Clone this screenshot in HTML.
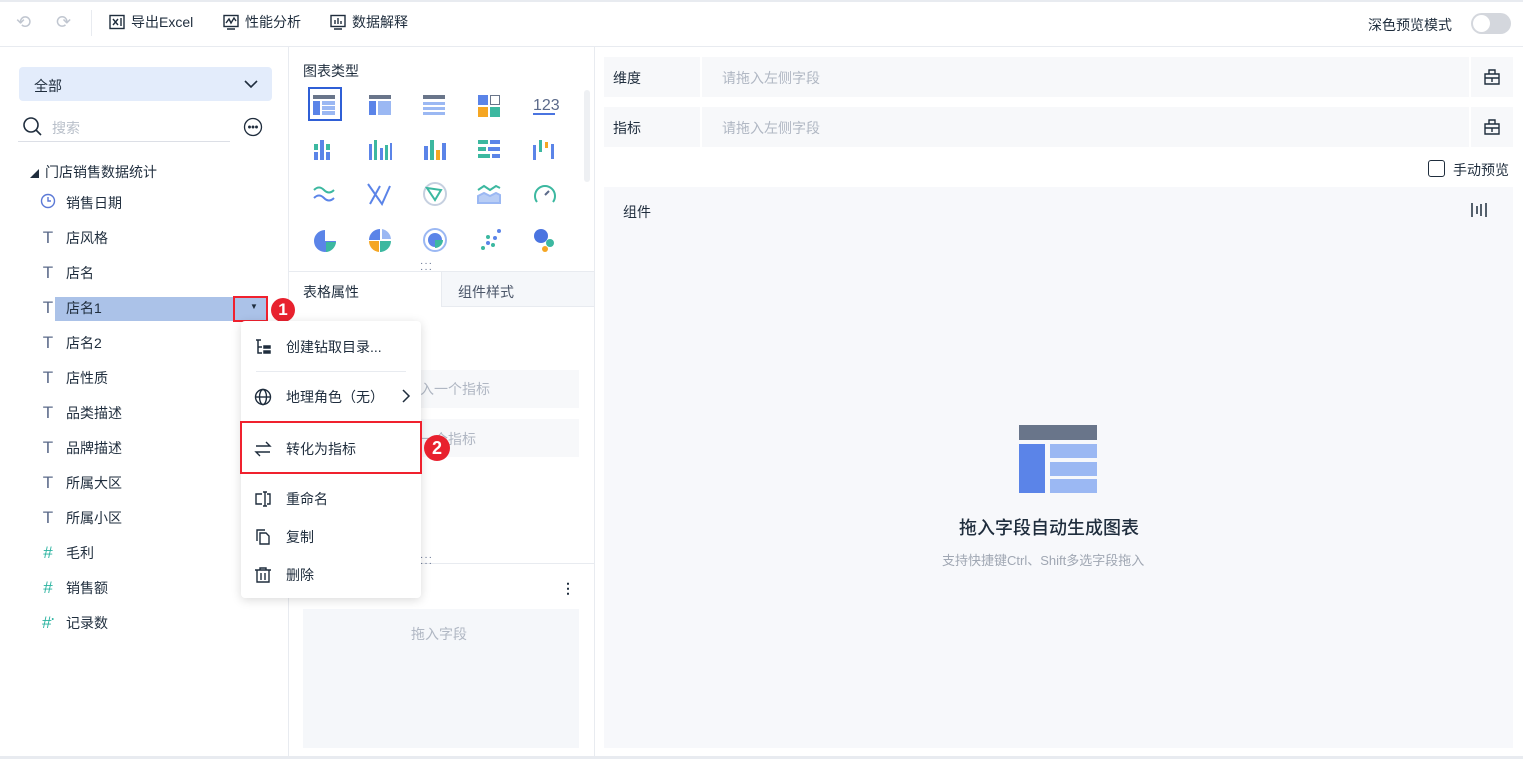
<!DOCTYPE html><html><head><meta charset="utf-8"><style>
*{box-sizing:border-box;margin:0;padding:0}
body{width:1523px;height:759px;overflow:hidden;background:#fff;font-family:"Liberation Sans","Noto Sans CJK SC",sans-serif;font-size:14px;color:#1f2d3d;position:relative}
.a{position:absolute}
.top{left:0;top:0;width:1523px;height:47px;border-top:2px solid #e8ebf0;border-bottom:1px solid #e8ebf0}
.tb{top:12px;font-size:14px;color:#1f2d3d;display:flex;align-items:center;gap:6px}
.li{left:38px;display:flex;align-items:center;height:24px}
.li .ic{width:20px;color:#5b6a8a;font-size:17px;text-align:center;margin-right:8px}
.gi{width:24px;height:24px}
.mi{left:254px;display:flex;align-items:center;font-size:14px;color:#1f2d3d}
.mi svg{margin-right:14px}
</style></head><body>
<div class="a top"></div>
<div class="a" style="left:16px;top:12px;color:#c0c6d0;font-size:18px">⟲</div>
<div class="a" style="left:56px;top:12px;color:#c0c6d0;font-size:18px">⟳</div>
<div class="a" style="left:91px;top:10px;width:1px;height:26px;background:#e8ebf0"></div>
<div class="a tb" style="left:109px"><svg width="16" height="16" viewBox="0 0 16 16" fill="none" stroke="#1f2d3d" stroke-width="1.4"><rect x="1" y="1.5" width="14" height="13"/><path d="M4 5l5 6M9 5l-5 6M12 4v8"/></svg>导出Excel</div>
<div class="a tb" style="left:223px"><svg width="16" height="16" viewBox="0 0 16 16" fill="none" stroke="#1f2d3d" stroke-width="1.4"><rect x="1" y="1.5" width="14" height="11"/><path d="M3 9l3-4 2 4 3-5 2 3M4 15h8"/></svg>性能分析</div>
<div class="a tb" style="left:330px"><svg width="16" height="16" viewBox="0 0 16 16" fill="none" stroke="#1f2d3d" stroke-width="1.4"><rect x="1" y="1.5" width="14" height="11"/><path d="M5 10V6M8 10V4M11 10V7M4 15h8"/></svg>数据解释</div>
<div class="a" style="left:1368px;top:15px;font-size:14px">深色预览模式</div>
<div class="a" style="left:1471px;top:13px;width:40px;height:21px;border-radius:11px;background:#d4d7dd"><div style="position:absolute;left:2px;top:2px;width:17px;height:17px;border-radius:50%;background:#fff"></div></div>
<!-- left -->
<div class="a" style="left:288px;top:47px;width:1px;height:712px;background:#e8ebf0"></div>
<div class="a" style="left:19px;top:67px;width:253px;height:34px;background:#e3ecfb;border-radius:4px"></div>
<div class="a" style="left:34px;top:76px;font-size:14px">全部</div>
<svg class="a" style="left:243px;top:78px" width="16" height="12" viewBox="0 0 16 12" fill="none" stroke="#1f2d3d" stroke-width="1.6"><path d="M2 3l6 6 6-6"/></svg>
<svg class="a" style="left:22px;top:116px" width="22" height="22" viewBox="0 0 22 22" fill="none" stroke="#1f2d3d" stroke-width="1.6"><circle cx="9" cy="9" r="7"/><path d="M14 14l5 5"/></svg>
<div class="a" style="left:52px;top:118px;color:#b8bfc9">搜索</div>
<div class="a" style="left:18px;top:141px;width:212px;height:1px;background:#dcdfe6"></div>
<svg class="a" style="left:243px;top:117px" width="20" height="20" viewBox="0 0 20 20" fill="none" stroke="#1f2d3d" stroke-width="1.3"><circle cx="10" cy="10" r="8.5"/><circle cx="6.5" cy="10" r=".8" fill="#1f2d3d"/><circle cx="10" cy="10" r=".8" fill="#1f2d3d"/><circle cx="13.5" cy="10" r=".8" fill="#1f2d3d"/></svg>
<div class="a" style="left:30px;top:162px;font-size:14px"><span style="font-size:9px;margin-right:6px">◢</span>门店销售数据统计</div>
<div class="a" style="left:55px;top:297px;width:213px;height:24px;background:#abc2e8"></div>
<div class="a" style="left:233px;top:296px;width:35px;height:26px;border:2px solid #f0212e"></div>
<div class="a" style="left:250px;top:302px;font-size:8px">▼</div>
<div class="a" style="left:271px;top:298px;width:24px;height:24px;border-radius:50%;background:#e8212e;color:#fff;font-weight:bold;font-size:17px;text-align:center;line-height:24px">1</div>
<div class="a li" style="top:191px"><span class="ic"><svg width="16" height="16" viewBox="0 0 16 16" fill="none" stroke="#5b79d6" stroke-width="1.4"><circle cx="8" cy="8" r="6.5"/><path d="M8 4v4h3"/></svg></span>销售日期</div>
<div class="a li" style="top:226px"><span class="ic">T</span>店风格</div>
<div class="a li" style="top:261px"><span class="ic">T</span>店名</div>
<div class="a li" style="top:296px"><span class="ic">T</span>店名1</div>
<div class="a li" style="top:331px"><span class="ic">T</span>店名2</div>
<div class="a li" style="top:366px"><span class="ic">T</span>店性质</div>
<div class="a li" style="top:401px"><span class="ic">T</span>品类描述</div>
<div class="a li" style="top:436px"><span class="ic">T</span>品牌描述</div>
<div class="a li" style="top:471px"><span class="ic">T</span>所属大区</div>
<div class="a li" style="top:506px"><span class="ic">T</span>所属小区</div>
<div class="a li" style="top:541px"><span class="ic" style="color:#2bb3a0">#</span>毛利</div>
<div class="a li" style="top:576px"><span class="ic" style="color:#2bb3a0">#</span>销售额</div>
<div class="a li" style="top:611px"><span class="ic" style="color:#2bb3a0">#<sup style="font-size:7px">•</sup></span>记录数</div>
<!-- middle -->
<div class="a" style="left:594px;top:47px;width:1px;height:712px;background:#e8ebf0"></div>
<div class="a" style="left:303px;top:61px;font-size:14px">图表类型</div>
<div class="a" style="left:584px;top:90px;width:6px;height:92px;border-radius:3px;background:#eef0f3"></div>
<div class="a" style="left:308px;top:87px;width:34px;height:34px;border:2px solid #2f5fd6"></div>
<svg class="a" style="left:300px;top:90px" width="270" height="170" viewBox="0 0 270 170">
<g transform="translate(13,5)"><rect width="22" height="4" fill="#69758a"/><rect y="6" width="7" height="14" fill="#5b84e8"/><rect x="9" y="6" width="13" height="4" fill="#9bb8f3"/><rect x="9" y="11" width="13" height="4" fill="#9bb8f3"/><rect x="9" y="16" width="13" height="4" fill="#9bb8f3"/></g>
<g transform="translate(69,5)"><rect width="22" height="4" fill="#69758a"/><rect y="6" width="7" height="14" fill="#5b84e8"/><rect x="9" y="6" width="13" height="14" fill="#9bb8f3"/></g>
<g transform="translate(123,5)"><rect width="22" height="4" fill="#69758a"/><rect y="7" width="22" height="3" fill="#9bb8f3"/><rect y="12" width="22" height="3" fill="#9bb8f3"/><rect y="17" width="22" height="3" fill="#9bb8f3"/></g>
<g transform="translate(178,5)"><rect width="10" height="10" fill="#5b84e8"/><rect x="12.5" y=".5" width="9" height="9" fill="none" stroke="#69758a"/><rect y="12" width="10" height="10" fill="#f5a623"/><rect x="12" y="12" width="10" height="10" fill="#3cb8a0"/></g>
<text x="233" y="20" font-size="16" fill="#5b6a8a" font-family="Liberation Sans">123</text><rect x="233" y="23" width="22" height="2" fill="#4a74e0"/>
<g fill="#5b84e8"><rect x="20" y="50" width="4" height="20"/><rect x="14" y="54" width="4" height="6" fill="#3cb8a0"/><rect x="26" y="54" width="4" height="6" fill="#3cb8a0"/><rect x="14" y="62" width="4" height="8"/><rect x="26" y="62" width="4" height="8"/>
<rect x="69" y="54" width="3" height="16"/><rect x="74" y="50" width="3" height="20" fill="#3cb8a0"/><rect x="80" y="58" width="3" height="12"/><rect x="85" y="55" width="3" height="15" fill="#3cb8a0"/><rect x="90" y="53" width="2" height="17"/>
<rect x="124" y="56" width="4" height="14"/><rect x="130" y="50" width="4" height="20" fill="#3cb8a0"/><rect x="136" y="60" width="4" height="10" fill="#f5a623"/><rect x="142" y="53" width="4" height="17"/>
<rect x="178" y="50" width="10" height="4" fill="#3cb8a0"/><rect x="190" y="50" width="10" height="4"/><rect x="178" y="57" width="8" height="4" fill="#3cb8a0"/><rect x="188" y="57" width="12" height="4"/><rect x="178" y="64" width="12" height="4" fill="#3cb8a0"/><rect x="192" y="64" width="8" height="4"/>
<rect x="233" y="55" width="3" height="15"/><rect x="239" y="50" width="3" height="12" fill="#3cb8a0"/><rect x="245" y="52" width="3" height="6" fill="#f5a623"/><rect x="251" y="54" width="3" height="15"/></g>
<g fill="none" stroke-width="2"><path d="M14 100q5-5 10 0t10 0" stroke="#3cb8a0"/><path d="M14 108q5-5 10 0t10 0" stroke="#5b84e8"/><path d="M68 94l14 20 8-18M70 114l10-18" stroke="#5b84e8"/><circle cx="135" cy="104" r="11" stroke="#c6d0e0"/><path d="M127 98l14 2-6 10z" stroke="#3cb8a0"/><path d="M178 100l6-4 6 4 6-4 4 2" stroke="#3cb8a0"/><path d="M178 106l6-3 6 3 6-3 4 2v8h-22z" fill="#b8cdf5" stroke="#9bb8f3"/><path d="M237 112a10 10 0 1 1 16 0" stroke="#3cb8a0"/><path d="M245 105l4-4" stroke="#5b6a8a"/></g>
<path d="M25 140a11 11 0 1 0 11 11h-11z" fill="#5b84e8"/><path d="M26 152h10a11 11 0 0 1-10 10z" fill="#3cb8a0"/>
<path d="M80 139a11 11 0 0 0-11 11h11z" fill="#5b84e8"/><path d="M80 151h11a11 11 0 0 1-11 11z" fill="#3cb8a0"/><path d="M79 151v11a11 11 0 0 1-10-11z" fill="#f5a623"/><path d="M82 139a11 11 0 0 1 9 10h-9z" fill="#9bb8f3"/>
<circle cx="135" cy="150" r="11" fill="none" stroke="#9bb8f3" stroke-width="2"/><circle cx="135" cy="150" r="7" fill="#5b84e8"/><path d="M135 150h8a8 8 0 0 1-8 8z" fill="#3cb8a0"/>
<g fill="#5b84e8"><circle cx="183" cy="158" r="2" fill="#3cb8a0"/><circle cx="188" cy="153" r="2"/><circle cx="193" cy="155" r="2" fill="#3cb8a0"/><circle cx="195" cy="148" r="2"/><circle cx="199" cy="141" r="2"/><circle cx="188" cy="147" r="2" fill="#3cb8a0"/></g>
<circle cx="241" cy="146" r="7" fill="#4a74e0"/><circle cx="250" cy="153" r="4" fill="#3cb8a0"/><circle cx="245" cy="159" r="3" fill="#f5a623"/>
</svg>
<div class="a" style="left:289px;top:271px;width:305px;height:1px;background:#e8ebf0"></div>
<div class="a" style="left:420px;top:261px;font-size:10px;letter-spacing:1px;color:#5b6a8a;line-height:6px">···<br>···</div>
<div class="a" style="left:441px;top:272px;width:153px;height:35px;background:#f5f7fa;border-left:1px solid #e8ebf0;border-bottom:1px solid #e8ebf0"></div>
<div class="a" style="left:303px;top:282px;font-size:14px">表格属性</div>
<div class="a" style="left:458px;top:282px;font-size:14px;color:#4a5568">组件样式</div>
<div class="a" style="left:303px;top:370px;width:276px;height:38px;background:#f7f8fa"></div>
<div class="a" style="left:303px;top:419px;width:276px;height:38px;background:#f7f8fa"></div>
<div class="a" style="left:420px;top:379px;color:#b0b7c3">入一个指标</div>
<div class="a" style="left:420px;top:429px;color:#b0b7c3">一个指标</div>
<div class="a" style="left:289px;top:563px;width:305px;height:1px;background:#e8ebf0"></div>
<div class="a" style="left:420px;top:555px;font-size:10px;letter-spacing:1px;color:#5b6a8a;line-height:6px">···<br>···</div>
<div class="a" style="left:561px;top:580px;font-size:14px;font-weight:bold">⋮</div>
<div class="a" style="left:303px;top:609px;width:276px;height:139px;background:#f5f7fa"></div>
<div class="a" style="left:411px;top:624px;color:#b0b7c3">拖入字段</div>
<!-- menu -->
<div class="a" style="left:241px;top:321px;width:180px;height:277px;background:#fff;border-radius:4px;box-shadow:0 2px 10px rgba(0,0,0,.15)"></div>
<div class="a" style="left:256px;top:371px;width:150px;height:1px;background:#e8ebf0"></div>
<div class="a mi" style="top:337px"><svg width="18" height="18" viewBox="0 0 18 18" fill="none" stroke="#1f2d3d" stroke-width="1.5"><path d="M2 2h5M4 2v13h4M4 9h4"/><rect x="10" y="8" width="6" height="2" fill="#1f2d3d"/><rect x="10" y="13" width="6" height="2" fill="#1f2d3d"/></svg>创建钻取目录...</div>
<div class="a mi" style="top:387px"><svg width="18" height="18" viewBox="0 0 18 18" fill="none" stroke="#1f2d3d" stroke-width="1.4"><circle cx="9" cy="9" r="7.5"/><ellipse cx="9" cy="9" rx="3.5" ry="7.5"/><path d="M1.5 9h15"/></svg>地理角色（无）</div>
<svg class="a" style="left:401px;top:389px" width="10" height="14" viewBox="0 0 10 14" fill="none" stroke="#1f2d3d" stroke-width="1.5"><path d="M2 1l6 6-6 6"/></svg>
<div class="a" style="left:240px;top:421px;width:182px;height:53px;border:2px solid #f0212e"></div>
<div class="a mi" style="top:439px"><svg width="18" height="18" viewBox="0 0 18 18" fill="none" stroke="#1f2d3d" stroke-width="1.4"><path d="M2 6h14l-4-4M16 12H2l4 4"/></svg>转化为指标</div>
<div class="a" style="left:424px;top:435px;width:26px;height:26px;border-radius:50%;background:#e8212e;color:#fff;font-weight:bold;font-size:18px;text-align:center;line-height:26px">2</div>
<div class="a mi" style="top:489px"><svg width="18" height="18" viewBox="0 0 18 18" fill="none" stroke="#1f2d3d" stroke-width="1.4"><path d="M8 4H2v10h6M13 4h3v10h-3M9 2h4M11 2v14M9 16h4"/></svg>重命名</div>
<div class="a mi" style="top:527px"><svg width="18" height="18" viewBox="0 0 18 18" fill="none" stroke="#1f2d3d" stroke-width="1.4"><path d="M3 13V2h8"/><path d="M6 5h6l3 3v8H6z"/></svg>复制</div>
<div class="a mi" style="top:565px"><svg width="18" height="18" viewBox="0 0 18 18" fill="none" stroke="#1f2d3d" stroke-width="1.4"><path d="M1 4h16M6 4V2h6v2M3 4v12h12V4M7 7v7M11 7v7"/></svg>删除</div>
<!-- right -->
<div class="a" style="left:604px;top:57px;width:909px;height:40px;background:#f7f8fa"></div>
<div class="a" style="left:700px;top:57px;width:2px;height:40px;background:#fff"></div>
<div class="a" style="left:1469px;top:57px;width:2px;height:40px;background:#fff"></div>
<div class="a" style="left:604px;top:107px;width:909px;height:40px;background:#f7f8fa"></div>
<div class="a" style="left:700px;top:107px;width:2px;height:40px;background:#fff"></div>
<div class="a" style="left:1469px;top:107px;width:2px;height:40px;background:#fff"></div>
<div class="a" style="left:613px;top:68px">维度</div>
<div class="a" style="left:722px;top:68px;color:#b0b7c3">请拖入左侧字段</div>
<div class="a" style="left:613px;top:118px">指标</div>
<div class="a" style="left:722px;top:118px;color:#b0b7c3">请拖入左侧字段</div>
<svg class="a" style="left:1483px;top:68px" width="18" height="18" viewBox="0 0 18 18" fill="none" stroke="#1f2d3d" stroke-width="1.4"><path d="M6 6V2h6v4M2 6h14v10H2zM2 10h14M9 10v4"/></svg>
<svg class="a" style="left:1483px;top:118px" width="18" height="18" viewBox="0 0 18 18" fill="none" stroke="#1f2d3d" stroke-width="1.4"><path d="M6 6V2h6v4M2 6h14v10H2zM2 10h14M9 10v4"/></svg>
<div class="a" style="left:1428px;top:160px;width:17px;height:17px;border:1.5px solid #1f2d3d;border-radius:3px"></div>
<div class="a" style="left:1453px;top:160px">手动预览</div>
<div class="a" style="left:604px;top:187px;width:909px;height:561px;background:#f7f8fb"></div>
<div class="a" style="left:623px;top:202px">组件</div>
<svg class="a" style="left:1470px;top:202px" width="18" height="16" viewBox="0 0 18 16" stroke="#1f2d3d" stroke-width="1.5"><path d="M2 1v14M7 4v8M11 2v12M16 1v14"/></svg>
<div class="a" style="left:1019px;top:425px;width:78px;height:15px;background:#69758a"></div>
<div class="a" style="left:1019px;top:444px;width:26px;height:49px;background:#5b84e8"></div>
<div class="a" style="left:1050px;top:444px;width:47px;height:14px;background:#9bb8f3"></div>
<div class="a" style="left:1050px;top:462px;width:47px;height:14px;background:#9bb8f3"></div>
<div class="a" style="left:1050px;top:479px;width:47px;height:14px;background:#9bb8f3"></div>
<div class="a" style="left:959px;top:514px;font-size:18px;color:#1f2d3d;font-weight:500">拖入字段自动生成图表</div>
<div class="a" style="left:942px;top:550px;font-size:13px;color:#a0a7b3">支持快捷键Ctrl、Shift多选字段拖入</div>
<div class="a" style="left:0;top:756px;width:1523px;height:3px;background:#e8ebf0"></div>
</body></html>
